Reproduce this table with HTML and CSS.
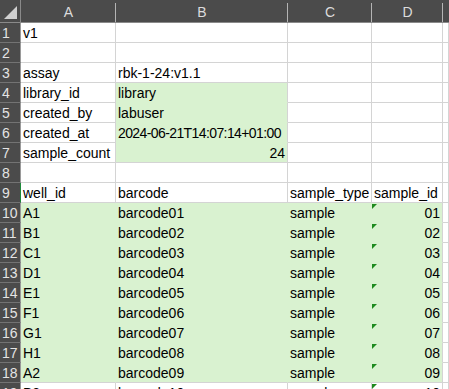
FILE: index.html
```html
<!DOCTYPE html>
<html>
<head>
<meta charset="utf-8">
<link rel="stylesheet" href="styles.css">
</head>
<body>
<div class="sheet">
  <div class="corner"><span class="corner-tri"></span></div>
  <div class="colhdr">A</div>
  <div class="colhdr">B</div>
  <div class="colhdr">C</div>
  <div class="colhdr">D</div>
  <div class="colhdr colhdr-e"></div>

  <div class="rowhdr">1</div><div class="cell">v1</div><div class="cell"></div><div class="cell"></div><div class="cell"></div><div class="cell"></div>
  <div class="rowhdr">2</div><div class="cell"></div><div class="cell"></div><div class="cell"></div><div class="cell"></div><div class="cell"></div>
  <div class="rowhdr">3</div><div class="cell">assay</div><div class="cell">rbk-1-24:v1.1</div><div class="cell"></div><div class="cell"></div><div class="cell"></div>
  <div class="rowhdr">4</div><div class="cell">library_id</div><div class="cell g gr">library</div><div class="cell"></div><div class="cell"></div><div class="cell"></div>
  <div class="rowhdr">5</div><div class="cell">created_by</div><div class="cell g gr">labuser</div><div class="cell"></div><div class="cell"></div><div class="cell"></div>
  <div class="rowhdr">6</div><div class="cell">created_at</div><div class="cell g gr tight">2024-06-21T14:07:14+01:00</div><div class="cell"></div><div class="cell"></div><div class="cell"></div>
  <div class="rowhdr">7</div><div class="cell">sample_count</div><div class="cell g gr gb num">24</div><div class="cell"></div><div class="cell"></div><div class="cell"></div>
  <div class="rowhdr">8</div><div class="cell"></div><div class="cell"></div><div class="cell"></div><div class="cell"></div><div class="cell"></div>
  <div class="rowhdr rowhdr-sel">9</div><div class="cell">well_id</div><div class="cell">barcode</div><div class="cell">sample_type</div><div class="cell">sample_id</div><div class="cell"></div>

  <div class="rowhdr">10</div><div class="cell g">A1</div><div class="cell g">barcode01</div><div class="cell g">sample</div><div class="cell g gr num flag">01</div><div class="cell"></div>
  <div class="rowhdr">11</div><div class="cell g">B1</div><div class="cell g">barcode02</div><div class="cell g">sample</div><div class="cell g gr num flag">02</div><div class="cell"></div>
  <div class="rowhdr">12</div><div class="cell g">C1</div><div class="cell g">barcode03</div><div class="cell g">sample</div><div class="cell g gr num flag">03</div><div class="cell"></div>
  <div class="rowhdr">13</div><div class="cell g">D1</div><div class="cell g">barcode04</div><div class="cell g">sample</div><div class="cell g gr num flag">04</div><div class="cell"></div>
  <div class="rowhdr">14</div><div class="cell g">E1</div><div class="cell g">barcode05</div><div class="cell g">sample</div><div class="cell g gr num flag">05</div><div class="cell"></div>
  <div class="rowhdr">15</div><div class="cell g">F1</div><div class="cell g">barcode06</div><div class="cell g">sample</div><div class="cell g gr num flag">06</div><div class="cell"></div>
  <div class="rowhdr">16</div><div class="cell g">G1</div><div class="cell g">barcode07</div><div class="cell g">sample</div><div class="cell g gr num flag">07</div><div class="cell"></div>
  <div class="rowhdr">17</div><div class="cell g">H1</div><div class="cell g">barcode08</div><div class="cell g">sample</div><div class="cell g gr num flag">08</div><div class="cell"></div>
  <div class="rowhdr">18</div><div class="cell g gb">A2</div><div class="cell g gb">barcode09</div><div class="cell g gb">sample</div><div class="cell g gr gb num flag">09</div><div class="cell"></div>
  <div class="rowhdr">19</div><div class="cell">B2</div><div class="cell">barcode10</div><div class="cell">sample</div><div class="cell num flag">10</div><div class="cell"></div>
</div>
</body>
</html>
```
FILE: styles.css
```css
html, body {
  margin: 0;
  padding: 0;
  background: #ffffff;
  overflow: hidden;
}
body {
  width: 449px;
  height: 389px;
  font-family: "Liberation Sans", Arial, sans-serif;
  font-size: 14px;
  color: #000000;
}
.sheet {
  display: grid;
  grid-template-columns: 21px 95px 172px 84px 71px 6px;
  grid-template-rows: 23px repeat(19, 20px);
}
.corner {
  background: #4b4b4b;
  border-right: 1px solid #8a8a8a;
  border-bottom: 1px solid #8a8a8a;
  box-sizing: border-box;
  position: relative;
}
.corner-tri {
  position: absolute;
  right: 3px;
  bottom: 3px;
  width: 0;
  height: 0;
  border-left: 13px solid transparent;
  border-bottom: 13px solid #d0d0d0;
}
.colhdr {
  background: #4b4b4b;
  color: #dcdcdc;
  border-bottom: 1px solid #8a8a8a;
  box-sizing: border-box;
  position: relative;
  text-align: center;
  line-height: 16px;
  padding-top: 4px;
  font-size: 14px;
}
.colhdr::after {
  content: "";
  position: absolute;
  right: 0;
  top: 3px;
  bottom: 0;
  width: 1px;
  background: #b4b4b4;
}
.colhdr-e::after {
  display: none;
}
.rowhdr {
  background: #4b4b4b;
  color: #e4e4e4;
  border-bottom: 1px solid #737373;
  border-right: 1px solid #9a9a9a;
  box-sizing: border-box;
  padding-left: 2px;
  line-height: 16px;
  padding-top: 2px;
  font-size: 14px;
}
.rowhdr-sel {
  border-right-color: #1d8a3a;
}
.cell {
  border-right: 1px solid #d4d4d4;
  border-bottom: 1px solid #d4d4d4;
  box-sizing: border-box;
  padding: 2px 2px 0 2px;
  line-height: 16px;
  white-space: nowrap;
  overflow: visible;
  position: relative;
}
.tight {
  letter-spacing: -0.6px;
}
.g {
  background: #d9f2d0;
  border-right-color: #d9f2d0;
  border-bottom-color: #d9f2d0;
}
.g.gr {
  border-right-color: #d4d4d4;
}
.g.gb {
  border-bottom-color: #d4d4d4;
}
.num {
  text-align: right;
}
.flag::before {
  content: "";
  position: absolute;
  left: 0;
  top: 1px;
  width: 0;
  height: 0;
  border-top: 5px solid #1f8a1f;
  border-right: 5px solid transparent;
}
```
